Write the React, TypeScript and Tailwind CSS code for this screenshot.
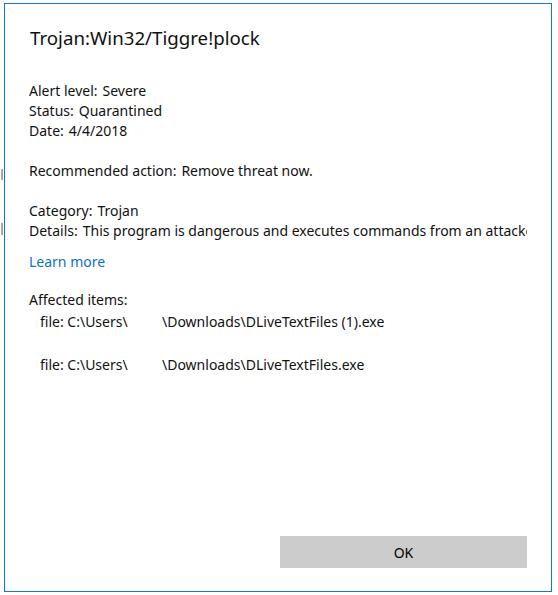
const font = { fontFamily: '"Noto Sans", "Open Sans", sans-serif' };

const Field = ({ label, value }: { label: string; value: string }) => (
  <div className="h-[20px] leading-[20px] whitespace-nowrap overflow-hidden">
    {label}
    <span className="ml-[5px]">{value}</span>
  </div>
);

const FileRow = ({ name }: { name: string }) => (
  <div className="h-[20px] leading-[20px] pl-[11px] whitespace-nowrap">
    <span className="inline-block w-[122px]">file: C:\Users\</span>
    <span>\Downloads\{name}</span>
  </div>
);

export default function App() {
  return (
    <div
      className="relative w-[558px] h-[595px] bg-white text-[#111] text-[14px] pt-[3px] pl-[4px]"
      style={font}
    >
      {/* bits of the window behind */}
      <div className="absolute left-[1px] top-[169px] w-[2px] h-[11px] bg-[#a8a8a8]" />
      <div className="absolute left-[1px] top-[223px] w-[2px] h-[12px] bg-[#a8a8a8]" />

      <div className="w-[548px] h-[589px] border border-[#1277d2] bg-white flex flex-col px-[24px] pt-[20px] pb-[23px]">
        <h1 className="text-[18.7px] leading-[28px] pl-[1px] whitespace-nowrap">
          Trojan:Win32/Tiggre!plock
        </h1>

        <div className="mt-[29px]">
          <Field label="Alert level:" value="Severe" />
          <Field label="Status:" value="Quarantined" />
          <Field label="Date:" value="4/4/2018" />
        </div>

        <div className="mt-[20px]">
          <Field label="Recommended action:" value="Remove threat now." />
        </div>

        <div className="mt-[20px]">
          <Field label="Category:" value="Trojan" />
          <Field
            label="Details:"
            value="This program is dangerous and executes commands from an attacker."
          />
        </div>

        <a className="mt-[11px] h-[20px] leading-[20px] text-[#0b72c9] self-start cursor-pointer">
          Learn more
        </a>

        <div className="mt-[18px]">
          <div className="h-[20px] leading-[20px]">Affected items:</div>
          <div className="mt-[2px]">
            <FileRow name="DLiveTextFiles (1).exe" />
          </div>
          <div className="mt-[23px]">
            <FileRow name="DLiveTextFiles.exe" />
          </div>
        </div>

        <div className="mt-auto flex justify-end">
          <button className="w-[247px] h-[32px] bg-[#cccccc] text-[14px] text-black">
            OK
          </button>
        </div>
      </div>
    </div>
  );
}
